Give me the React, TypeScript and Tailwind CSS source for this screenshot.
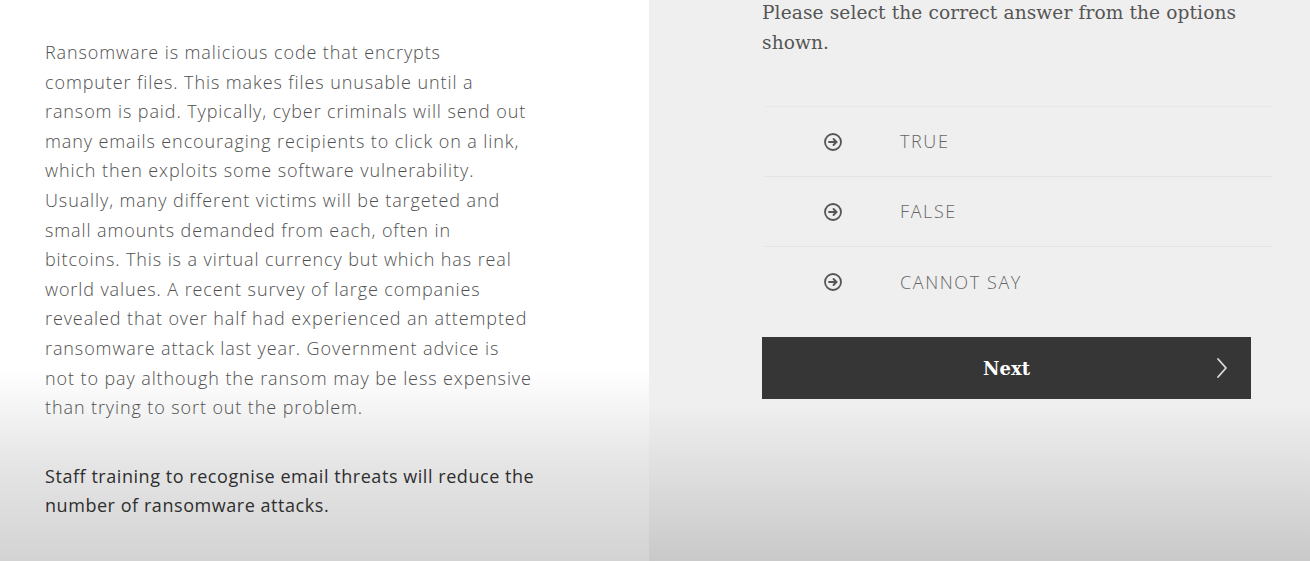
import React from "react";

function ArrowCircle() {
  return (
    <svg width="20" height="20" viewBox="0 0 20 20" fill="none" stroke="#555" strokeWidth="1.8" strokeLinecap="round" strokeLinejoin="round">
      <circle cx="10" cy="10" r="8" />
      <path d="M6 10h7.5" />
      <path d="M10.5 7l3 3-3 3" />
    </svg>
  );
}

const options = ["TRUE", "FALSE", "CANNOT SAY"];

const lines = [
  "Ransomware is malicious code that encrypts",
  "computer files. This makes files unusable until a",
  "ransom is paid. Typically, cyber criminals will send out",
  "many emails encouraging recipients to click on a link,",
  "which then exploits some software vulnerability.",
  "Usually, many different victims will be targeted and",
  "small amounts demanded from each, often in",
  "bitcoins. This is a virtual currency but which has real",
  "world values. A recent survey of large companies",
  "revealed that over half had experienced an attempted",
  "ransomware attack last year. Government advice is",
  "not to pay although the ransom may be less expensive",
  "than trying to sort out the problem.",
];

export default function App() {
  return (
    <div className="flex w-[1310px] h-[561px] overflow-hidden">
      <div
        className="w-[649px] shrink-0 bg-[linear-gradient(to_bottom,#ffffff_0%,#ffffff_66%,#e6e6e6_82%,#d3d3d3_100%)] pl-[45px] pt-[38px] text-[#505050]"
        style={{ fontFamily: "'Open Sans', Lato, sans-serif" }}
      >
        <p className="text-[18px] leading-[29.6px] tracking-[0.9px] font-[350]">
          {lines.map((l) => (
            <span key={l} className="block whitespace-nowrap">
              {l}
            </span>
          ))}
        </p>
        <p className="mt-[39px] text-[18px] leading-[29.6px] text-[#2e2e2e] tracking-[0.55px]">
          <span className="block whitespace-nowrap">Staff training to recognise email threats will reduce the</span>
          <span className="block whitespace-nowrap">number of ransomware attacks.</span>
        </p>
      </div>
      <div className="flex-1 bg-[linear-gradient(to_bottom,#efefef_0%,#efefef_72%,#dcdcdc_86%,#c9c9c9_100%)] pl-[113px] pr-[59px]">
        <p
          className="text-[18.6px] leading-[30px] text-[#555] -mt-[2px] tracking-[0.1px]"
          style={{ fontFamily: "'DejaVu Serif', serif" }}
        >
          Please select the correct answer from the options shown.
        </p>
        <div className="mt-[48px] ml-[3px] mr-[-22px] border-t border-[#e8e8e8]">
          {options.map((o, i) => (
            <div
              key={o}
              className={`flex items-center h-[70px] ${i < options.length - 1 ? "border-b border-[#e4e4e4]" : ""}`}
            >
              <div className="w-[135px] flex pl-[58px]">
                <ArrowCircle />
              </div>
              <span className="text-[18px] font-light tracking-[1.6px] text-[#666]" style={{ fontFamily: "'Open Sans', sans-serif" }}>
                {o}
              </span>
            </div>
          ))}
        </div>
        <button className="mt-[20px] flex items-center justify-center w-[489px] h-[62px] bg-[#363636] text-white relative">
          <span className="text-[18px] font-bold" style={{ fontFamily: "'DejaVu Serif', serif" }}>
            Next
          </span>
          <svg className="absolute right-[22px] top-[20px]" width="14" height="22" viewBox="0 0 14 22" fill="none" stroke="#ddd" strokeWidth="1.8" strokeLinecap="round" strokeLinejoin="round">
            <path d="M3 2l8 9-8 9" />
          </svg>
        </button>
      </div>
    </div>
  );
}
